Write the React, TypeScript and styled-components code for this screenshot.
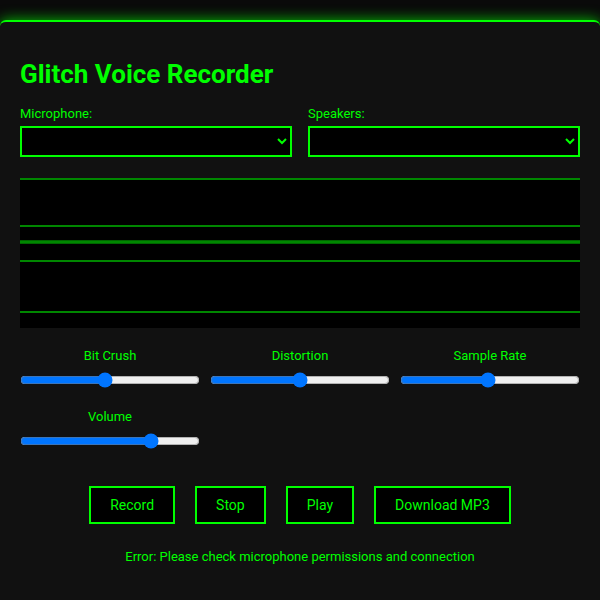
import React, { useState } from "react";
import styled, { createGlobalStyle } from "styled-components";

const GREEN = "#00ff00";

const GlobalStyle = createGlobalStyle`
  html, body {
    margin: 0;
    padding: 0;
    background: #0a0a0a;
    font-family: Roboto, "Liberation Sans", Arial, sans-serif;
    overflow: hidden;
  }
  * { box-sizing: border-box; }
`;

const Container = styled.div`
  margin-top: 20px;
  min-height: 580px;
  background: #111111;
  border-top: 2px solid ${GREEN};
  border-radius: 6px 6px 0 0;
  box-shadow: 0 0 14px rgba(0, 255, 0, 0.75);
  padding: 20px;
  color: ${GREEN};
`;

const Title = styled.h1`
  font-size: 26px;
  font-weight: 700;
  margin: 17px 0 17px;
  line-height: normal;
  color: ${GREEN};
`;

const DeviceRow = styled.div`
  display: grid;
  grid-template-columns: 1fr 1fr;
  gap: 16px;
`;

const DeviceGroup = styled.div`
  display: flex;
  flex-direction: column;
`;

const FieldLabel = styled.label`
  display: block;
  font-size: 13px;
  line-height: 15px;
  margin-bottom: 5px;
  color: ${GREEN};
`;

const Select = styled.select`
  width: 100%;
  height: 31px;
  background: #000;
  color: ${GREEN};
  border: 2px solid ${GREEN};
  border-radius: 0;
  font-family: inherit;
  font-size: 14px;
  padding: 4px 6px;
  outline: none;
`;

const Visualizer = styled.div`
  margin-top: 21px;
  height: 150px;
  background: #000;
`;

const Wave = styled.svg`
  display: block;
  width: 100%;
  height: 100%;
`;

const Controls = styled.div`
  margin-top: 20px;
  display: grid;
  grid-template-columns: repeat(3, 1fr);
  column-gap: 10px;
  row-gap: 21px;
`;

const ControlGroup = styled.div`
  display: flex;
  flex-direction: column;
  align-items: stretch;
`;

const ControlLabel = styled.label`
  display: block;
  text-align: center;
  font-size: 13px;
  line-height: 15px;
  margin-bottom: 9px;
  color: ${GREEN};
`;

const Range = styled.input`
  width: 100%;
  margin: 0;
  height: 16px;
`;

const Buttons = styled.div`
  margin-top: 37px;
  display: flex;
  justify-content: center;
  gap: 20px;
`;

const Button = styled.button`
  background: #000;
  color: ${GREEN};
  border: 2px solid ${GREEN};
  border-radius: 0;
  font-family: inherit;
  font-size: 14px;
  line-height: 16px;
  padding: 9px 19px;
  height: 38px;
  cursor: pointer;
`;

const ErrorText = styled.div`
  margin-top: 25px;
  text-align: center;
  font-size: 13px;
  line-height: 15px;
  color: ${GREEN};
`;

const lines = [
  { y: 1, w: 2 },
  { y: 48, w: 2 },
  { y: 64, w: 3.5 },
  { y: 83, w: 2 },
  { y: 134, w: 2 },
];

const sliders = [
  { name: "Bit Crush", min: 1, max: 16, value: 8 },
  { name: "Distortion", min: 0, max: 100, value: 50 },
  { name: "Sample Rate", min: 0, max: 100, value: 49 },
  { name: "Volume", min: 0, max: 100, value: 75 },
];

export default function App() {
  const [vals, setVals] = useState(sliders.map((s) => s.value));
  return (
    <>
      <GlobalStyle />
      <Container>
        <Title>Glitch Voice Recorder</Title>
        <DeviceRow>
          <DeviceGroup>
            <FieldLabel>Microphone:</FieldLabel>
            <Select />
          </DeviceGroup>
          <DeviceGroup>
            <FieldLabel>Speakers:</FieldLabel>
            <Select />
          </DeviceGroup>
        </DeviceRow>
        <Visualizer>
          <Wave viewBox="0 0 560 150" preserveAspectRatio="none">
            {lines.map((l, i) => (
              <line
                key={i}
                x1={0}
                x2={560}
                y1={l.y}
                y2={l.y}
                stroke="rgb(0,135,0)"
                strokeWidth={l.w}
              />
            ))}
          </Wave>
        </Visualizer>
        <Controls>
          {sliders.map((s, i) => (
            <ControlGroup key={s.name}>
              <ControlLabel>{s.name}</ControlLabel>
              <Range
                type="range"
                min={s.min}
                max={s.max}
                value={vals[i]}
                onChange={(e) => {
                  const v = [...vals];
                  v[i] = Number(e.target.value);
                  setVals(v);
                }}
              />
            </ControlGroup>
          ))}
        </Controls>
        <Buttons>
          <Button>Record</Button>
          <Button>Stop</Button>
          <Button>Play</Button>
          <Button>Download MP3</Button>
        </Buttons>
        <ErrorText>Error: Please check microphone permissions and connection</ErrorText>
      </Container>
    </>
  );
}
